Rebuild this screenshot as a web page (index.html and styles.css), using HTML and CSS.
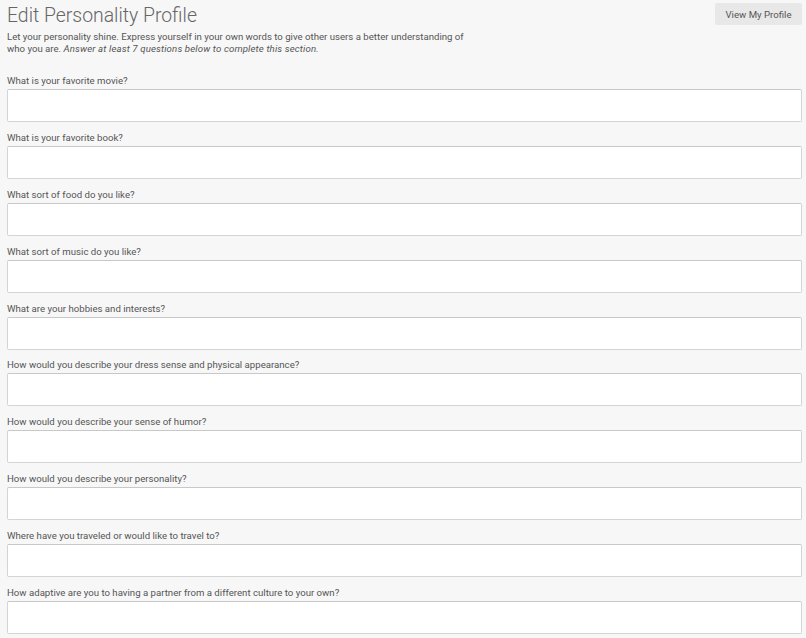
FILE: index.html
```html
<!DOCTYPE html>
<html>
<head>
<meta charset="utf-8">
<link rel="stylesheet" href="styles.css">
</head>
<body>
<div class="page">
  <header class="header">
    <div class="intro">
      <h1 class="title">Edit Personality Profile</h1>
      <p class="desc">Let your personality shine. Express yourself in your own words to give other users a better understanding of who you are. <em class="note">Answer at least 7 questions below to complete this section.</em></p>
    </div>
    <button class="btn">View My Profile</button>
  </header>
  <form class="form">
    <label class="field"><span class="label">What is your favorite movie?</span><input class="input" type="text"></label>
    <label class="field"><span class="label">What is your favorite book?</span><input class="input" type="text"></label>
    <label class="field"><span class="label">What sort of food do you like?</span><input class="input" type="text"></label>
    <label class="field"><span class="label">What sort of music do you like?</span><input class="input" type="text"></label>
    <label class="field"><span class="label">What are your hobbies and interests?</span><input class="input" type="text"></label>
    <label class="field"><span class="label">How would you describe your dress sense and physical appearance?</span><input class="input" type="text"></label>
    <label class="field"><span class="label">How would you describe your sense of humor?</span><input class="input" type="text"></label>
    <label class="field"><span class="label">How would you describe your personality?</span><input class="input" type="text"></label>
    <label class="field"><span class="label">Where have you traveled or would like to travel to?</span><input class="input" type="text"></label>
    <label class="field"><span class="label">How adaptive are you to having a partner from a different culture to your own?</span><input class="input" type="text"></label>
  </form>
</div>
</body>
</html>
```
FILE: styles.css
```css
html, body {
  margin: 0;
  padding: 0;
  background: #f7f7f7;
  font-family: Roboto, "Liberation Sans", sans-serif;
  color: #555;
}
.page {
  padding: 4px 4px 0 7px;
}
.header {
  display: flex;
  justify-content: space-between;
  align-items: flex-start;
}
.intro {
  width: 470px;
}
.title {
  margin: 0;
  font-size: 19.4px;
  line-height: 24px;
  font-weight: 300;
  color: #666;
}
.desc {
  margin: 3px 0 0;
  font-size: 9.65px;
  line-height: 12px;
  color: #555;
}
.note {
  letter-spacing: 0.14px;
}
.btn {
  margin-top: -1px;
  height: 22px;
  width: 87px;
  padding: 0;
  white-space: nowrap;
  border: none;
  border-radius: 2px;
  background: #e8e8e8;
  font-family: Roboto, "Liberation Sans", sans-serif;
  font-size: 9.65px;
  color: #555;
  cursor: pointer;
}
.form {
  margin-top: 20px;
  display: flex;
  flex-direction: column;
  gap: 9.9px;
}
.field {
  display: flex;
  flex-direction: column;
  gap: 2px;
}
.label {
  font-size: 9.65px;
  line-height: 12px;
  color: #555;
}
.input {
  box-sizing: border-box;
  width: 100%;
  height: 33px;
  margin: 0;
  border: 1px solid #d4d4d4;
  border-top-color: #c8c8c8;
  border-radius: 2px;
  background: #fff;
  font-family: Roboto, "Liberation Sans", sans-serif;
  font-size: 10px;
  padding: 0 8px;
  outline: none;
}
```
